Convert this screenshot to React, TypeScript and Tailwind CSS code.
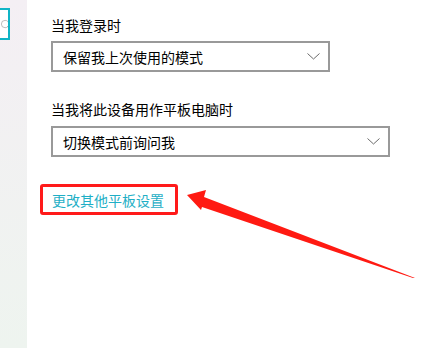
import { Search } from "lucide-react";

const font = { fontFamily: '"Noto Sans CJK SC", "Noto Sans", sans-serif' };

const Chevron = () => (
  <svg width="13" height="7" viewBox="0 0 13 7" className="shrink-0">
    <path d="M0.5 0.5 L6.5 6 L12.5 0.5" fill="none" stroke="#6b6b6b" strokeWidth="1" />
  </svg>
);

const Dropdown = ({ value, width }: { value: string; width: string }) => (
  <div className={`flex h-[31px] items-center justify-between border-2 border-[#999999] bg-white pl-[10px] pr-[8px] ${width}`}>
    <span className="text-[14px] leading-5 text-black">{value}</span>
    <Chevron />
  </div>
);

export default function App() {
  return (
    <div className="relative flex h-[348px] w-[444px] overflow-hidden bg-white" style={font}>
      {/* Sidebar strip */}
      <div className="w-[27px] shrink-0 bg-gradient-to-b from-[#f4eff4] to-[#eef4ef] pt-2">
        <div className="flex h-[32px] w-[10px] items-center justify-end overflow-hidden border-2 border-l-0 border-[#10b4c6] bg-white">
          <Search size={11} strokeWidth={1.2} className="-mr-[3px] shrink-0 text-[#8a8a8a]" />
        </div>
      </div>

      {/* Settings content */}
      <div className="flex flex-col items-start pl-6 pt-[15px]">
        <div className="text-[14px] leading-5 text-black">当我登录时</div>
        <div className="mt-[6px]">
          <Dropdown value="保留我上次使用的模式" width="w-[279px]" />
        </div>

        <div className="mt-[27px] text-[14px] leading-5 text-black">当我将此设备用作平板电脑时</div>
        <div className="mt-[7px]">
          <Dropdown value="切换模式前询问我" width="w-[339px]" />
        </div>

        <div className="-ml-[11px] mt-[27px] rounded-[3px] border-[3px] border-[#ff1a1a] pl-[9px] pr-[11px] pb-[1px]">
          <span className="text-[14px] leading-5 text-[#1fafc6]">更改其他平板设置</span>
        </div>
      </div>

      {/* Annotation arrow */}
      <svg className="pointer-events-none absolute left-0 top-0" width="444" height="348" viewBox="0 0 444 348">
        <polygon
          points="187,195 206,190 204,197 415,278 413,278 202,207 201,210"
          fill="#ff1a12"
        />
      </svg>
    </div>
  );
}
